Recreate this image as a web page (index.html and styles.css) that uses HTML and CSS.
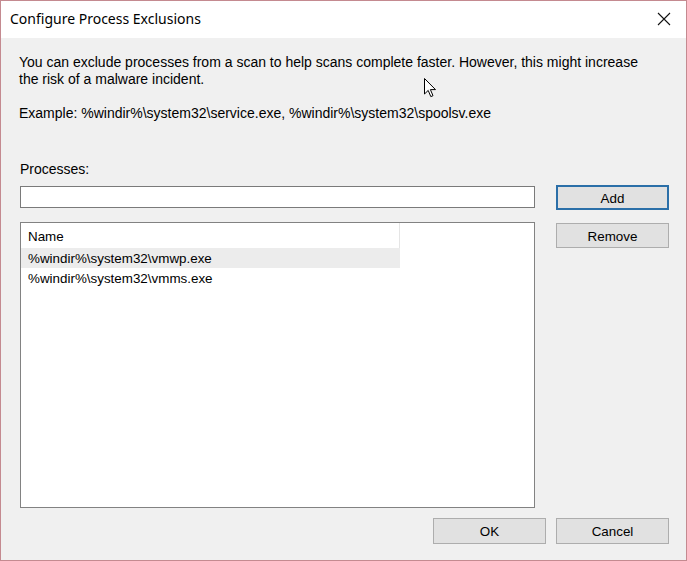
FILE: index.html
```html
<!DOCTYPE html>
<html>
<head>
<meta charset="utf-8">
<link rel="stylesheet" href="styles.css">
</head>
<body>
<div class="window">
  <div class="titlebar">
    <span class="title">Configure Process Exclusions</span>
    <svg class="close" width="14" height="14" viewBox="0 0 14 14"><path d="M1 1 L13 13 M13 1 L1 13" stroke="#111" stroke-width="1.1" fill="none"/></svg>
  </div>
  <div class="content">
    <p class="intro">You can exclude processes from a scan to help scans complete faster. However, this might increase the risk of a malware incident.</p>
    <p class="example">Example: %windir%\system32\service.exe, %windir%\system32\spoolsv.exe</p>
    <div class="main">
      <div class="left">
        <div class="label">Processes:</div>
        <input class="textbox" type="text">
        <div class="list">
          <div class="header"><span class="col">Name</span></div>
          <div class="row selected">%windir%\system32\vmwp.exe</div>
          <div class="row">%windir%\system32\vmms.exe</div>
        </div>
      </div>
      <div class="right">
        <div class="btn default">Add</div>
        <div class="btn">Remove</div>
      </div>
    </div>
    <div class="footer">
      <div class="btn">OK</div>
      <div class="btn">Cancel</div>
    </div>
  </div>
  <svg class="cursor" width="13" height="20" viewBox="0 0 13 20"><path d="M0.5 0.5 L0.5 16 L4.2 12.4 L6.8 18.6 L9 17.7 L6.4 11.6 L11.5 11.6 Z" fill="#fff" stroke="#000" stroke-width="1"/></svg>
</div>
</body>
</html>
```

FILE: styles.css
```css
* { box-sizing: border-box; }
html, body { margin: 0; padding: 0; }
body { width: 687px; height: 561px; overflow: hidden; background: #f0f0f0; }
.window {
  position: relative;
  width: 687px; height: 561px;
  border: 1px solid #c48a90;
  background: #f0f0f0;
  display: flex; flex-direction: column;
  font-family: "Liberation Sans", Arial, sans-serif;
  font-size: 13px;
  color: #000;
}
.titlebar {
  height: 37px;
  background: #fff;
  display: flex; align-items: center; justify-content: space-between;
  padding: 0 15px 0 9px;
}
.title { font-family: "Noto Sans", "Open Sans", sans-serif; font-size: 14px; color: #000; padding-bottom: 2px; }
.close { display: block; margin-top: -1px; }
.content {
  flex: 1;
  display: flex; flex-direction: column;
  padding: 16px 17px 0 18px;
}
p { margin: 0; line-height: 17px; font-size: 14px; }
.intro { width: 636px; }
.example { margin-top: 17px; }
.main { display: flex; gap: 21px; margin-top: 39px; }
.left { width: 516px; display: flex; flex-direction: column; }
.label { line-height: 17px; margin-left: 1px; font-size: 14px; }
.textbox {
  margin: 8px 0 0 1px;
  width: 515px; height: 22px;
  border: 1px solid #7a7a7a;
  background: #fff;
  padding: 0; outline: none;
}
.list {
  margin: 14px 0 0 1px;
  width: 515px; height: 286px;
  border: 1px solid #828282;
  background: #fff;
  padding: 0;
  font-size: 13.4px;
}
.header { height: 25px; display: flex; }
.col {
  width: 379px; height: 25px; line-height: 27px;
  padding-left: 7px;
  border-right: 1px solid #e5e5e5;
}
.row { width: 379px; height: 20px; line-height: 21px; padding-left: 7px; }
.row.selected { background: #ececec; }
.right { display: flex; flex-direction: column; gap: 13px; padding-top: 24px; }
.btn {
  width: 113px; height: 25px;
  border: 1px solid #adadad;
  background: #e1e1e1;
  display: flex; align-items: center; justify-content: center;
  font-size: 13.4px;
  padding-top: 1px;
}
.btn.default { border: 2px solid #2b6fa8; }
.footer { display: flex; justify-content: flex-end; gap: 10px; margin-top: 10px; }
.footer .btn { height: 26px; }
.cursor { position: absolute; left: 423px; top: 77px; }
```
